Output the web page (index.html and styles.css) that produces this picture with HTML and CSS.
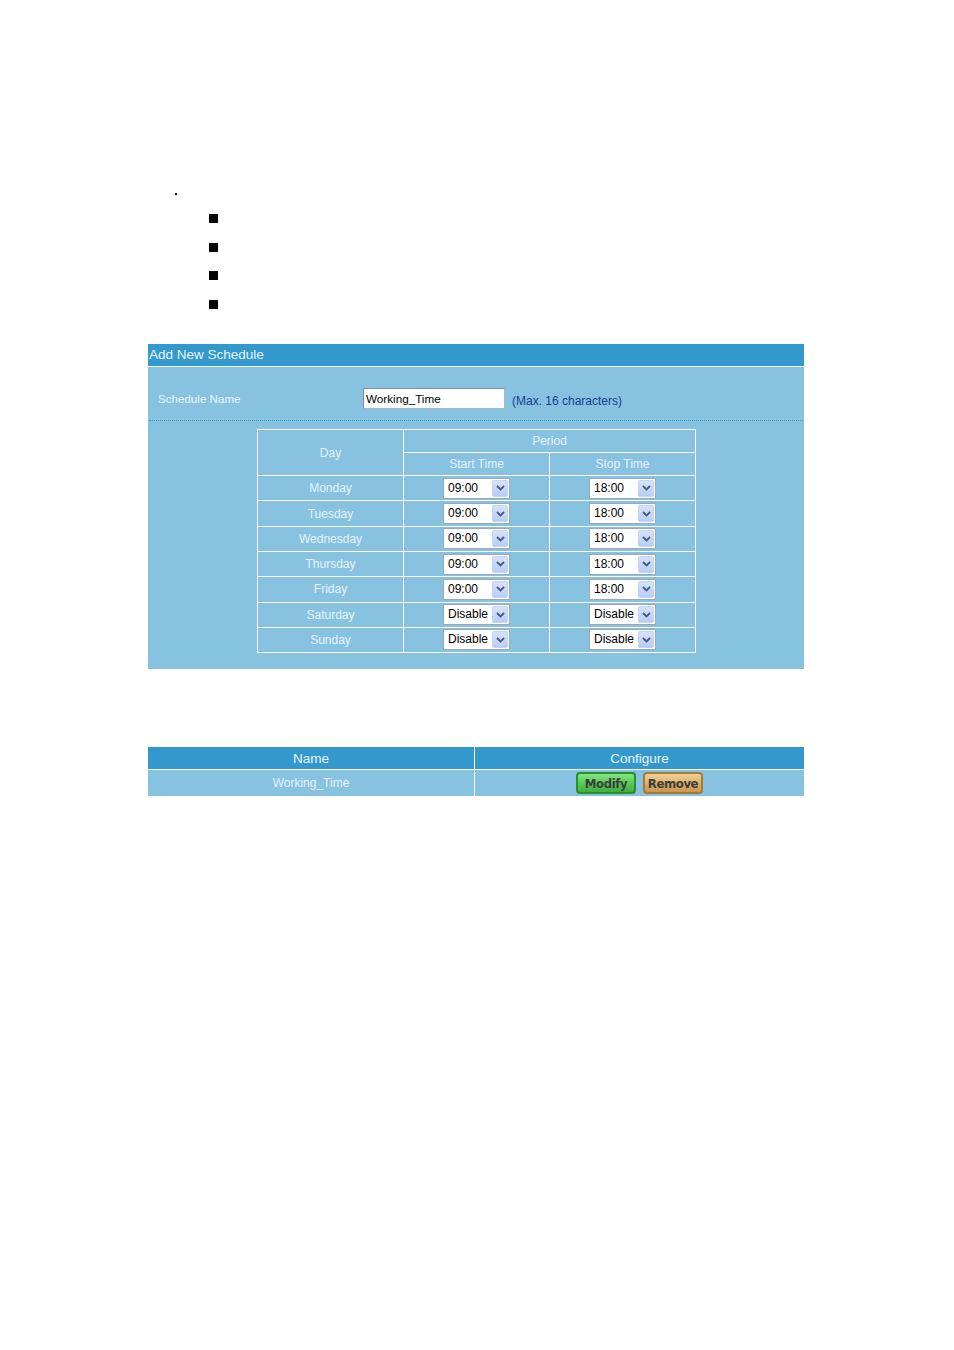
FILE: index.html
```html
<!DOCTYPE html>
<html>
<head>
<meta charset="utf-8">
<title>Add New Schedule</title>
<link rel="stylesheet" href="styles.css">
</head>
<body>
<div class="page">
  <div class="dot"></div>
  <div class="marks">
    <span class="sq"></span>
    <span class="sq"></span>
    <span class="sq"></span>
    <span class="sq"></span>
  </div>

  <div class="panel">
    <div class="panel-head">Add New Schedule</div>
    <div class="panel-body">
      <div class="name-row">
        <div class="name-label">Schedule Name</div>
        <div class="name-input">Working_Time</div>
        <div class="name-hint">(Max. 16 characters)</div>
      </div>
      <div class="grid-wrap">
        <table class="grid">
          <tr class="hrow">
            <td rowspan="2" class="c-day">Day</td>
            <td colspan="2">Period</td>
          </tr>
          <tr class="hrow">
            <td>Start Time</td>
            <td>Stop Time</td>
          </tr>
          <tr>
            <td>Monday</td>
            <td><span class="sel"><span class="val">09:00</span><span class="btn"><svg width="9" height="6" viewBox="0 0 9 6"><path d="M1 1 L4.5 4.5 L8 1" fill="none" stroke="#4a5a7a" stroke-width="1.8"/></svg></span></span></td>
            <td><span class="sel"><span class="val">18:00</span><span class="btn"><svg width="9" height="6" viewBox="0 0 9 6"><path d="M1 1 L4.5 4.5 L8 1" fill="none" stroke="#4a5a7a" stroke-width="1.8"/></svg></span></span></td>
          </tr>
          <tr>
            <td>Tuesday</td>
            <td><span class="sel"><span class="val">09:00</span><span class="btn"><svg width="9" height="6" viewBox="0 0 9 6"><path d="M1 1 L4.5 4.5 L8 1" fill="none" stroke="#4a5a7a" stroke-width="1.8"/></svg></span></span></td>
            <td><span class="sel"><span class="val">18:00</span><span class="btn"><svg width="9" height="6" viewBox="0 0 9 6"><path d="M1 1 L4.5 4.5 L8 1" fill="none" stroke="#4a5a7a" stroke-width="1.8"/></svg></span></span></td>
          </tr>
          <tr>
            <td>Wednesday</td>
            <td><span class="sel"><span class="val">09:00</span><span class="btn"><svg width="9" height="6" viewBox="0 0 9 6"><path d="M1 1 L4.5 4.5 L8 1" fill="none" stroke="#4a5a7a" stroke-width="1.8"/></svg></span></span></td>
            <td><span class="sel"><span class="val">18:00</span><span class="btn"><svg width="9" height="6" viewBox="0 0 9 6"><path d="M1 1 L4.5 4.5 L8 1" fill="none" stroke="#4a5a7a" stroke-width="1.8"/></svg></span></span></td>
          </tr>
          <tr>
            <td>Thursday</td>
            <td><span class="sel"><span class="val">09:00</span><span class="btn"><svg width="9" height="6" viewBox="0 0 9 6"><path d="M1 1 L4.5 4.5 L8 1" fill="none" stroke="#4a5a7a" stroke-width="1.8"/></svg></span></span></td>
            <td><span class="sel"><span class="val">18:00</span><span class="btn"><svg width="9" height="6" viewBox="0 0 9 6"><path d="M1 1 L4.5 4.5 L8 1" fill="none" stroke="#4a5a7a" stroke-width="1.8"/></svg></span></span></td>
          </tr>
          <tr>
            <td>Friday</td>
            <td><span class="sel"><span class="val">09:00</span><span class="btn"><svg width="9" height="6" viewBox="0 0 9 6"><path d="M1 1 L4.5 4.5 L8 1" fill="none" stroke="#4a5a7a" stroke-width="1.8"/></svg></span></span></td>
            <td><span class="sel"><span class="val">18:00</span><span class="btn"><svg width="9" height="6" viewBox="0 0 9 6"><path d="M1 1 L4.5 4.5 L8 1" fill="none" stroke="#4a5a7a" stroke-width="1.8"/></svg></span></span></td>
          </tr>
          <tr>
            <td>Saturday</td>
            <td><span class="sel"><span class="val">Disable</span><span class="btn"><svg width="9" height="6" viewBox="0 0 9 6"><path d="M1 1 L4.5 4.5 L8 1" fill="none" stroke="#4a5a7a" stroke-width="1.8"/></svg></span></span></td>
            <td><span class="sel"><span class="val">Disable</span><span class="btn"><svg width="9" height="6" viewBox="0 0 9 6"><path d="M1 1 L4.5 4.5 L8 1" fill="none" stroke="#4a5a7a" stroke-width="1.8"/></svg></span></span></td>
          </tr>
          <tr>
            <td>Sunday</td>
            <td><span class="sel"><span class="val">Disable</span><span class="btn"><svg width="9" height="6" viewBox="0 0 9 6"><path d="M1 1 L4.5 4.5 L8 1" fill="none" stroke="#4a5a7a" stroke-width="1.8"/></svg></span></span></td>
            <td><span class="sel"><span class="val">Disable</span><span class="btn"><svg width="9" height="6" viewBox="0 0 9 6"><path d="M1 1 L4.5 4.5 L8 1" fill="none" stroke="#4a5a7a" stroke-width="1.8"/></svg></span></span></td>
          </tr>
        </table>
      </div>
    </div>
  </div>

  <table class="list">
    <tr class="list-head">
      <td>Name</td>
      <td>Configure</td>
    </tr>
    <tr class="list-row">
      <td>Working_Time</td>
      <td><span class="b b-mod">Modify</span><span class="b b-rem">Remove</span></td>
    </tr>
  </table>
</div>
</body>
</html>
```

FILE: styles.css
```css
html, body {
  margin: 0;
  padding: 0;
  background: #ffffff;
}

body {
  font-family: "Liberation Sans", Arial, sans-serif;
}

.page {
  margin-left: 148px;
  width: 656px;
  padding-top: 193px;
}

.dot {
  width: 2px;
  height: 2px;
  background: #000;
  margin-left: 27px;
}

.marks {
  display: flex;
  flex-direction: column;
  gap: 19.7px;
  margin-top: 19px;
  padding-left: 61px;
}

.sq {
  display: block;
  width: 9px;
  height: 9px;
  background: #000;
}

.panel {
  margin-top: 35px;
  width: 656px;
}

.panel-head {
  height: 22px;
  line-height: 21px;
  background: #3399cc;
  color: #eaf5fc;
  font-size: 13.5px;
  padding-left: 1px;
  border-bottom: 1px solid #ffffff;
}

.panel-body {
  background: #87c3e1;
  padding-bottom: 16px;
}

.name-row {
  display: flex;
  align-items: center;
  padding-top: 21px;
  padding-bottom: 11px;
  border-bottom: 1px dotted #3d9dd2;
  margin: 0 1px;
}

.name-label {
  width: 205px;
  padding-left: 9px;
  color: #e8f4fb;
  font-size: 11.6px;
}

.name-input {
  width: 138px;
  height: 19px;
  line-height: 19px;
  background: #ffffff;
  border: 1px solid #a8b8c8;
  border-top-color: #7f8f9f;
  border-left-color: #7f8f9f;
  font-size: 11.7px;
  color: #000;
  padding-left: 2px;
  margin-right: 7px;
}

.name-hint {
  font-size: 12px;
  color: #173c8e;
  padding-top: 4px;
}

.grid-wrap {
  display: flex;
  padding-top: 8px;
  padding-left: 109px;
}

.grid {
  border-collapse: collapse;
  width: 439px;
  table-layout: fixed;
}

.grid td {
  border: 1px solid #ffffff;
  text-align: center;
  color: #e6f2fa;
  font-size: 12px;
  padding: 0;
  height: 24.3px;
  vertical-align: middle;
}

.grid .hrow td {
  height: 22px;
}

.grid td.c-day {
  width: 145px;
}

.sel {
  display: inline-flex;
  vertical-align: middle;
  width: 67px;
  height: 21px;
  box-sizing: border-box;
  background: #ffffff;
  border: 1px solid #9aa8b8;
  padding: 1px;
  text-align: left;
}

.val {
  flex: 1;
  color: #000;
  font-size: 12px;
  line-height: 17px;
  padding-left: 3px;
}

.btn {
  width: 16px;
  height: 17px;
  box-sizing: border-box;
  background: linear-gradient(#d6e2fc, #b8cdf6);
  border: 1px solid #c4d4f4;
  border-radius: 2px;
  display: flex;
  align-items: center;
  justify-content: center;
}

.list {
  margin-top: 78px;
  width: 656px;
  border-collapse: collapse;
  table-layout: fixed;
}

.list td {
  padding: 0;
  text-align: center;
}

.list-head td {
  background: #3399cc;
  color: #eaf5fc;
  font-size: 13.5px;
  height: 22px;
  border-bottom: 1px solid #ffffff;
}

.list-head td:first-child,
.list-row td:first-child {
  width: 326px;
  border-right: 1px solid #ffffff;
}

.list-row td {
  background: #87c3e1;
  color: #e6f2fa;
  font-size: 12px;
  height: 26px;
}

.b {
  display: inline-block;
  vertical-align: middle;
  width: 60px;
  height: 22px;
  box-sizing: border-box;
  border-radius: 4px;
  font-family: "DejaVu Sans Condensed", "DejaVu Sans", sans-serif;
  font-weight: bold;
  font-size: 13px;
  line-height: 19px;
  color: #3c3c3c;
  letter-spacing: -0.4px;
}

.b-mod {
  background: linear-gradient(#86e482, #55c853 55%, #3fae3f);
  border: 2px solid #2a8f2a;
}

.b-rem {
  margin-left: 7px;
  background: linear-gradient(#f2d29a, #dbad66 55%, #c89650);
  border: 2px solid #a87a38;
}
```
